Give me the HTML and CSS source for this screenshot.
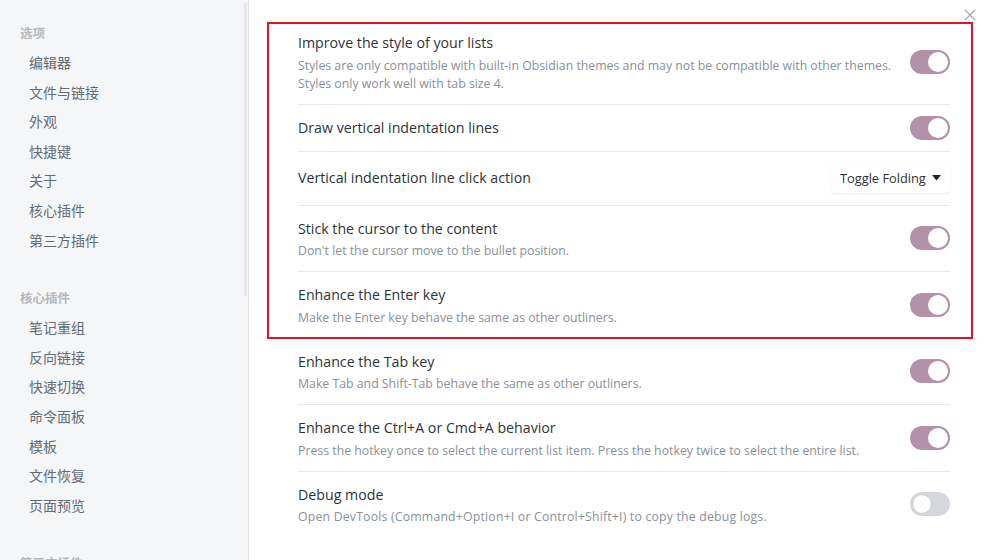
FILE: index.html
```html
<!DOCTYPE html>
<html lang="zh-CN">
<head>
<meta charset="utf-8">
<title>Settings</title>
<link rel="stylesheet" href="styles.css">
</head>
<body>
<div class="app">
  <nav class="sidebar">
    <div class="scroll-thumb"></div>
    <div class="nav-group">
      <div class="nav-heading">选项</div>
      <div class="nav-item">编辑器</div>
      <div class="nav-item">文件与链接</div>
      <div class="nav-item">外观</div>
      <div class="nav-item">快捷键</div>
      <div class="nav-item">关于</div>
      <div class="nav-item">核心插件</div>
      <div class="nav-item">第三方插件</div>
    </div>
    <div class="nav-group">
      <div class="nav-heading">核心插件</div>
      <div class="nav-item">笔记重组</div>
      <div class="nav-item">反向链接</div>
      <div class="nav-item">快速切换</div>
      <div class="nav-item">命令面板</div>
      <div class="nav-item">模板</div>
      <div class="nav-item">文件恢复</div>
      <div class="nav-item">页面预览</div>
    </div>
    <div class="nav-group">
      <div class="nav-heading">第三方插件</div>
      <div class="nav-item">Outliner</div>
    </div>
  </nav>
  <main class="content">
    <div class="close-btn">
      <svg width="12" height="12" viewBox="0 0 12 12"><path d="M1 1 L11 11 M11 1 L1 11" stroke="#a3a6aa" stroke-width="1.2" fill="none"/></svg>
    </div>
    <div class="highlight-box"></div>

    <div class="setting first">
      <div class="info">
        <div class="name">Improve the style of your lists</div>
        <div class="desc">Styles are only compatible with built-in Obsidian themes and may not be compatible with other themes.<br>Styles only work well with tab size 4.</div>
      </div>
      <div class="toggle on"><span class="knob"></span></div>
    </div>

    <div class="setting">
      <div class="info">
        <div class="name">Draw vertical indentation lines</div>
      </div>
      <div class="toggle on"><span class="knob"></span></div>
    </div>

    <div class="setting">
      <div class="info">
        <div class="name">Vertical indentation line click action</div>
      </div>
      <div class="dropdown">
        <span>Toggle Folding</span>
        <svg width="9" height="6" viewBox="0 0 9 6"><path d="M0 0 H9 L4.5 5.5 Z" fill="#222"/></svg>
      </div>
    </div>

    <div class="setting">
      <div class="info">
        <div class="name">Stick the cursor to the content</div>
        <div class="desc">Don't let the cursor move to the bullet position.</div>
      </div>
      <div class="toggle on"><span class="knob"></span></div>
    </div>

    <div class="setting">
      <div class="info">
        <div class="name">Enhance the Enter key</div>
        <div class="desc">Make the Enter key behave the same as other outliners.</div>
      </div>
      <div class="toggle on"><span class="knob"></span></div>
    </div>

    <div class="setting">
      <div class="info">
        <div class="name">Enhance the Tab key</div>
        <div class="desc">Make Tab and Shift-Tab behave the same as other outliners.</div>
      </div>
      <div class="toggle on"><span class="knob"></span></div>
    </div>

    <div class="setting">
      <div class="info">
        <div class="name">Enhance the Ctrl+A or Cmd+A behavior</div>
        <div class="desc">Press the hotkey once to select the current list item. Press the hotkey twice to select the entire list.</div>
      </div>
      <div class="toggle on"><span class="knob"></span></div>
    </div>

    <div class="setting">
      <div class="info">
        <div class="name">Debug mode</div>
        <div class="desc wide">Open DevTools (Command+Option+I or Control+Shift+I) to copy the debug logs.</div>
      </div>
      <div class="toggle"><span class="knob"></span></div>
    </div>
  </main>
</div>
</body>
</html>
```

FILE: styles.css
```css
html, body {
  margin: 0;
  padding: 0;
  height: 100%;
  overflow: hidden;
}
body {
  font-family: "Open Sans", "Noto Sans", "Noto Sans CJK SC", sans-serif;
  background: #ffffff;
}
.app {
  display: flex;
  height: 560px;
}
.sidebar {
  position: relative;
  width: 249px;
  flex: 0 0 249px;
  background: #f5f6f8;
  border-right: 1px solid #dcdee1;
  padding-top: 18px;
  box-sizing: border-box;
  overflow: hidden;
  font-family: "Noto Sans CJK SC", "Noto Sans", sans-serif;
}
.scroll-thumb {
  position: absolute;
  left: 244px;
  top: 2px;
  width: 3px;
  height: 294px;
  background: #e7e9ec;
  border-radius: 2px;
}
.nav-group {
  margin-bottom: 28px;
}
.nav-heading {
  height: 30px;
  line-height: 30px;
  padding-left: 20px;
  font-size: 12.5px;
  font-weight: 600;
  color: #b5b9be;
}
.nav-item {
  height: 29.6px;
  line-height: 29.6px;
  padding-left: 29px;
  font-size: 14px;
  color: #646b75;
}
.content {
  position: relative;
  flex: 1;
  padding: 20px 44px 0 49px;
  box-sizing: border-box;
  min-width: 0;
}
.close-btn {
  position: absolute;
  left: 715px;
  top: 9px;
  width: 12px;
  height: 12px;
}
.close-btn svg { display: block; }
.highlight-box {
  position: absolute;
  left: 18px;
  top: 22px;
  width: 706px;
  height: 317px;
  box-sizing: border-box;
  border: 2px solid #e81123;
  pointer-events: none;
  z-index: 2;
}
.setting {
  display: flex;
  align-items: center;
  justify-content: space-between;
  padding: 12px 0;
  border-top: 1px solid #e8e8ea;
}
.setting.first {
  border-top: none;
}
.info {
  flex: 1;
  min-width: 0;
}
.name {
  font-size: 14.2px;
  line-height: 22px;
  color: #2e3338;
}
.desc {
  margin: 2.5px 0 -1px;
  font-size: 12.3px;
  line-height: 18px;
  color: #8a8f98;
}
.desc.wide {
  letter-spacing: 0.18px;
}
.toggle {
  position: relative;
  flex: 0 0 40px;
  width: 40px;
  height: 24px;
  margin: -1px 0 -1px 16px;
  border-radius: 12px;
  background: #d4d8dd;
}
.toggle.on {
  background: #b391aa;
}
.knob {
  position: absolute;
  top: 2px;
  left: 2px;
  width: 20px;
  height: 20px;
  border-radius: 50%;
  background: #ffffff;
  box-sizing: border-box;
  border: 1px solid #c4c9cf;
}
.toggle.on .knob {
  left: 18px;
  border: none;
}
.dropdown {
  display: flex;
  align-items: center;
  justify-content: space-between;
  height: 29px;
  padding: 0 9px;
  width: 119px;
  box-sizing: border-box;
  border-radius: 4px;
  background: #ffffff;
  box-shadow: 0 1px 2px rgba(0,0,0,0.08), 0 0 1px rgba(0,0,0,0.06);
  font-size: 12.8px;
  color: #2e3338;
  white-space: nowrap;
}
.dropdown svg { flex: 0 0 auto; }
```
